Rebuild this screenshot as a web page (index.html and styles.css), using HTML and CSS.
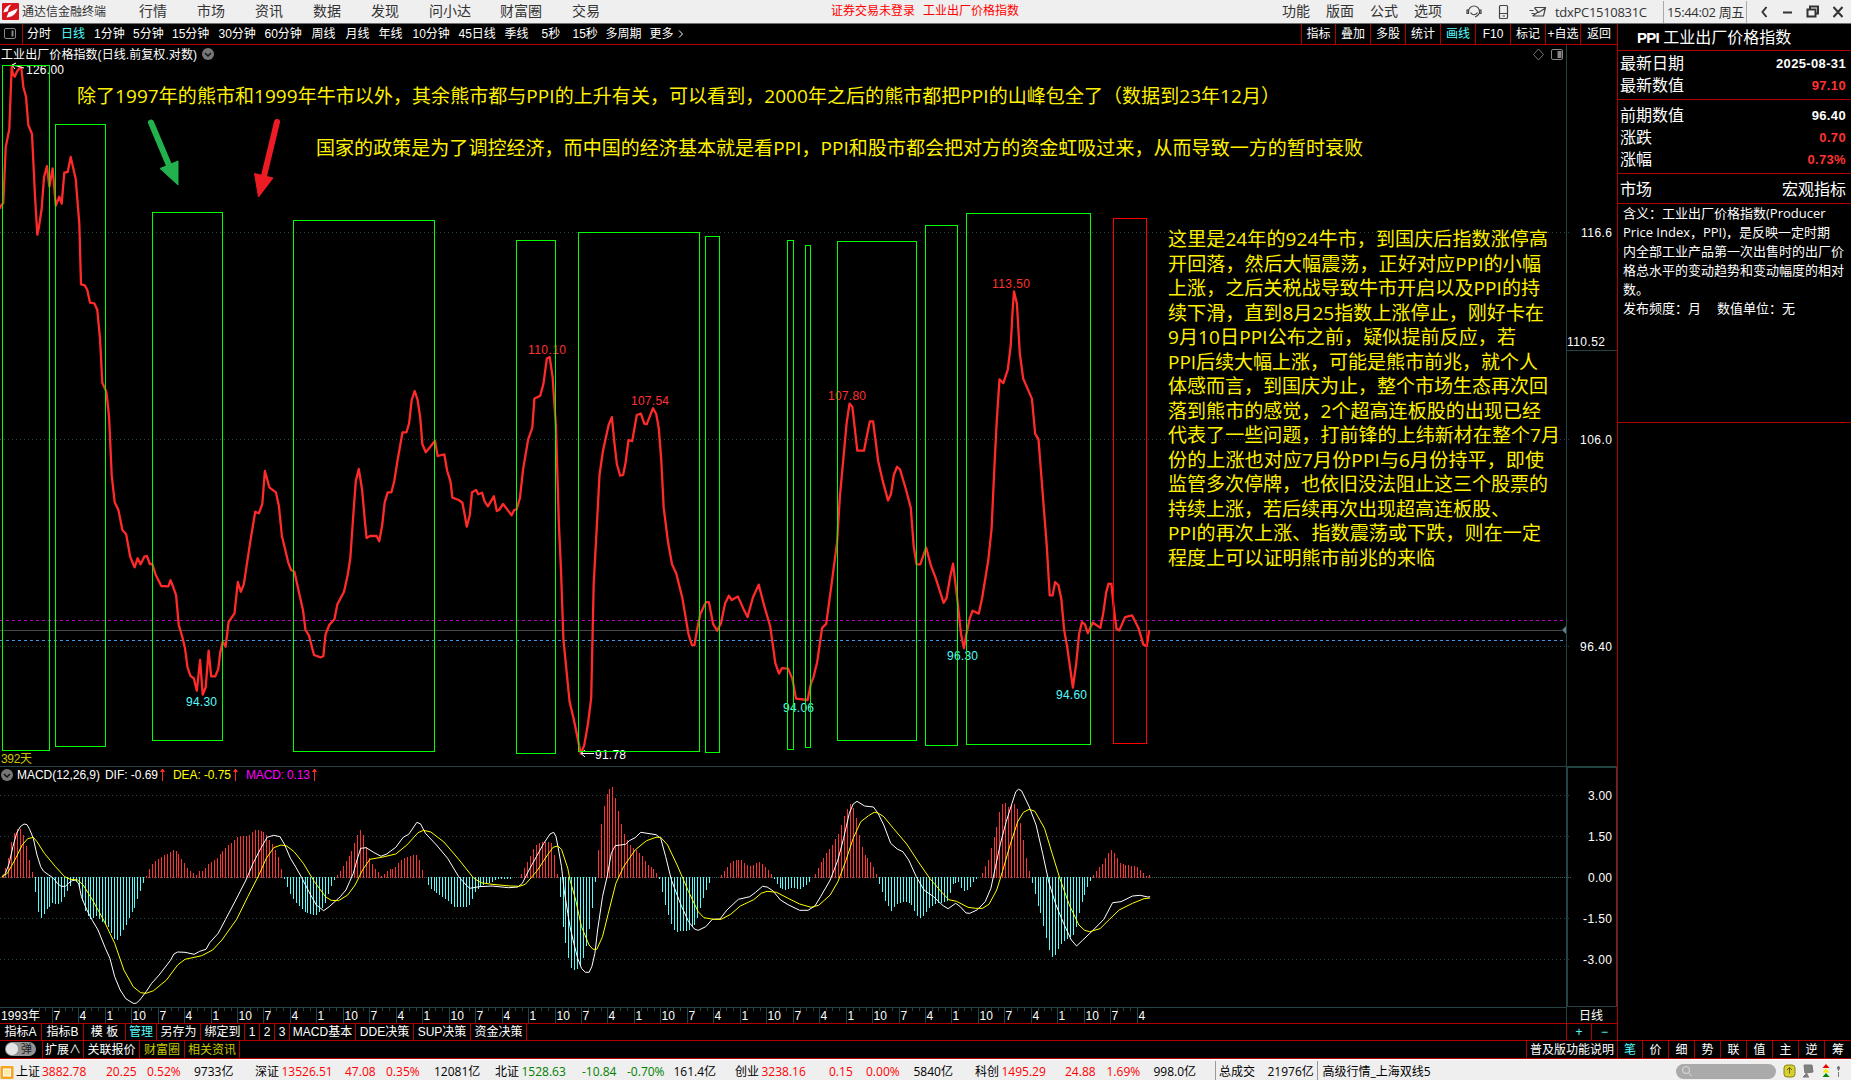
FILE: index.html
```
<!DOCTYPE html>
<html lang="zh-CN">
<head>
<meta charset="utf-8">
<title>通达信金融终端</title>
<link rel="stylesheet" href="styles.css">
</head>
<body>
<header class="topbar">
  <svg class="logo" width="17" height="17" viewBox="0 0 17 17"><rect width="17" height="17" rx="1" fill="#d8141c"/><path d="M9.500 1.500C5 2.500 2 5.500 1.500 9.500L6 8.200C6 5.500 7.500 3.500 9.500 1.500zM15.500 5.500 11 7.500 6.500 9.500 4.500 14.500C10 14.500 14.500 11 15.500 5.500z" fill="#fff"/></svg>
  <span class="appname">通达信金融终端</span>
  <nav class="menu"><span>行情</span><span>市场</span><span>资讯</span><span>数据</span><span>发现</span><span>问小达</span><span>财富圈</span><span>交易</span></nav>
  <div class="notice"><span>证券交易未登录</span><span>工业出厂价格指数</span></div>
  <nav class="menu2"><span>功能</span><span>版面</span><span>公式</span><span>选项</span></nav>
  <svg class="sysicons" width="82" height="22" viewBox="0 0 82 22" fill="none" stroke="#444" stroke-width="1.200"><path d="M3.500 10.500a5.500 5.500 0 0 1 11 0M3.500 9v3.500H2V9zM14.500 9v3.500H16V9zM14 12.500a5.500 5.500 0 0 1-4 3.500M5.500 11.500c2 3 5 3 7 0"/><rect x="34.500" y="4.500" width="8" height="13" rx="1"/><path d="M34.500 12.500h8M37.500 15h2.500"/><path d="M69.500 6.500h11l-2 8.500H68.500M69.500 7l4 4.500 7-4.500M64.500 9.500h4M67.500 15l5.500-4M66.500 12.500h3"/></svg>
  <span class="user">tdxPC1510831C</span>
  <span class="clock">15:44:02 周五</span>
  <svg class="winicons" width="92" height="22" viewBox="0 0 92 22" fill="none" stroke="#333" stroke-width="2"><path d="M11.500 6 7.500 11l4 5M28 11.500h9M52.500 8.500h8v7h-8zM55 8V5.500h8v7h-2.500M78.500 6l9 10M87.500 6l-9 10"/></svg>
</header>
<main class="work">
  <section class="left">
    <div class="toolbar">
      <svg class="paneicon" width="22" height="20" viewBox="0 0 22 20" fill="none" stroke="#888"><rect x="4.500" y="4.500" width="11" height="10" rx="1.500"/><path d="M12.500 6.500v6" stroke-width="2"/></svg>
      <div class="periods"><span>分时</span><span class="on">日线</span><span>1分钟</span><span>5分钟</span><span>15分钟</span><span>30分钟</span><span>60分钟</span><span>周线</span><span>月线</span><span>年线</span><span>10分钟</span><span>45日线</span><span>季线</span><span>5秒</span><span>15秒</span><span>多周期</span><span>更多<svg width="8" height="10" viewBox="0 0 8 10"><path d="M2 1.500 5.500 5 2 8.500" fill="none" stroke="#fff"/></svg></span></div>
      <div class="tools"><span>指标</span><span>叠加</span><span>多股</span><span>统计</span><span class="on">画线</span><span>F10</span><span>标记</span><span>+自选</span><span>返回</span></div>
    </div>
    <svg class="chart" width="1617" height="978" viewBox="0 45 1617 978">
      <g class="frame">
        <path d="M0 766.500H1617M1566.500 45V1023M0 1007.500H1566"/>
        <path d="M1566 767.500H1616.500V1006.500H1567.500V767" />
        <path d="M1566 350.500H1617"/>
      </g>
      <path class="grid" d="M0 232.500H1572M0 439.500H1572M0 646.500H1572M0 795.500H1572M0 836.500H1572M0 918.500H1572M0 959.500H1572"/>
      <path class="zero" d="M0 877.500H1572"/>
      <path class="level" d="M0 630.500H1562"/>
      <path d="M1566 626v8l-4-4z" fill="#5a8088"/>
      <path class="level magenta" d="M0 620.500H1566"/>
      <path class="level blue" d="M0 640.500H1566"/>
      <g id="hist"></g>
      <polyline id="ppi" class="ppi"/>
      <polyline id="dif" class="dif"/>
      <polyline id="dea" class="dea"/>
      <g class="mark up"><text x="528" y="354" textLength="38">110.10</text><text x="631" y="405" textLength="38">107.54</text><text x="828" y="400" textLength="38">107.80</text><text x="992" y="288" textLength="38">113.50</text></g>
      <g class="mark down"><text x="186" y="706" textLength="31">94.30</text><text x="783" y="712" textLength="31">94.06</text><text x="947" y="660" textLength="31">96.30</text><text x="1056" y="699" textLength="31">94.60</text></g>
      <g class="mark white"><text x="26" y="74" textLength="38">126.00</text><text x="595" y="759" textLength="31">91.78</text><path d="M24 68 13 65M16 63l-4 2 3 4M594 753.500H581M585 750l-4 3.500 4 3.500" fill="none" stroke="#fff"/></g>
      <g class="zones">
        <path d="M2.500 65.500H49.500V750.500H2.500zM55.500 124.500H105.500V746.500H55.500zM152.500 212.500H222.500V740.500H152.500zM293.500 220.500H434.500V751.500H293.500zM516.500 240.500H555.500V753.500H516.500zM578.500 232.500H699.500V751.500H578.500zM705.500 236.500H719.500V752.500H705.500zM787.500 240.500H793.500V749.500H787.500zM805.500 245.500H810.500V747.500H805.500zM837.500 241.500H916.500V740.500H837.500zM925.500 225.500H957.500V745.500H925.500zM966.500 213.500H1090.500V744.500H966.500z"/>
        <path class="warn" d="M1113.500 218.500H1146.500V743.500H1113.500z"/>
      </g>
      <g fill="#22b14c" stroke="#22b14c"><path d="M151 122.500 171 170" stroke-width="6" stroke-linecap="round"/><path d="M160 168.500 178 161V185z"/></g>
      <g fill="#ed1c24" stroke="#ed1c24"><path d="M277 122 263.500 178" stroke-width="6" stroke-linecap="round"/><path d="M254.500 173.500 273 178 258.500 197z"/></g>
      <g class="note">
        <text x="77" y="103" textLength="1203">除了1997年的熊市和1999年牛市以外，其余熊市都与PPI的上升有关，可以看到，2000年之后的熊市都把PPI的山峰包全了（数据到23年12月）</text>
        <text x="316" y="155" textLength="1047">国家的政策是为了调控经济，而中国的经济基本就是看PPI，PPI和股市都会把对方的资金虹吸过来，从而导致一方的暂时衰败</text>
        <text x="1168" y="246" textLength="380">这里是24年的924牛市，到国庆后指数涨停高</text>
        <text x="1168" y="270.500" textLength="373">开回落，然后大幅震荡，正好对应PPI的小幅</text>
        <text x="1168" y="295" textLength="372">上涨，之后关税战导致牛市开启以及PPI的持</text>
        <text x="1168" y="319.500" textLength="376">续下滑，直到8月25指数上涨停止，刚好卡在</text>
        <text x="1168" y="344" textLength="348">9月10日PPI公布之前，疑似提前反应，若</text>
        <text x="1168" y="368.500" textLength="370">PPI后续大幅上涨，可能是熊市前兆，就个人</text>
        <text x="1168" y="393" textLength="380">体感而言，到国庆为止，整个市场生态再次回</text>
        <text x="1168" y="417.500" textLength="373">落到熊市的感觉，2个超高连板股的出现已经</text>
        <text x="1168" y="442" textLength="392">代表了一些问题，打前锋的上纬新材在整个7月</text>
        <text x="1168" y="466.500" textLength="376">份的上涨也对应7月份PPI与6月份持平，即使</text>
        <text x="1168" y="491" textLength="380">监管多次停牌，也依旧没法阻止这三个股票的</text>
        <text x="1168" y="515.500" textLength="342">持续上涨，若后续再次出现超高连板股、</text>
        <text x="1168" y="540" textLength="373">PPI的再次上涨、指数震荡或下跌，则在一定</text>
        <text x="1168" y="564.500" textLength="267">程度上可以证明熊市前兆的来临</text>
      </g>
      <g class="lab"><text x="1" y="59" textLength="196">工业出厂价格指数(日线.前复权.对数)</text>
        <text class="olive" x="1" y="763" textLength="31">392天</text>
        <text x="17" y="779" textLength="83">MACD(12,26,9)</text><text x="105" y="779" textLength="53">DIF: -0.69</text>
        <text x="173" y="779" textLength="58" fill="#ffff00">DEA: -0.75</text><text x="246" y="779" textLength="64" fill="#ff00ff">MACD: 0.13</text>
        <path d="M162.500 781v-12M160.500 772l2-3 2 3M235.500 781v-12M233.500 772l2-3 2 3M314.500 781v-12M312.500 772l2-3 2 3" stroke="#ff2a2a" fill="#ff2a2a"/>
      </g>
      <g fill="none"><circle cx="208" cy="54" r="6" fill="#777"/><path d="m205 53 3 3 3-3" stroke="#111" stroke-width="1.500"/><circle cx="7" cy="775" r="6" fill="#777"/><path d="m4 774 3 3 3-3" stroke="#111" stroke-width="1.500"/><path d="M1538.500 49l5 5.500-5 5.500-5-5.500z" stroke="#777"/><rect x="1551.500" y="49.500" width="11" height="10" rx="1.500" stroke="#888"/><path d="M1557.500 51h4v7h-4z" fill="#888"/></g>
      <g class="axis"><text x="1581" y="237" textLength="31">116.6</text><text x="1567" y="346" textLength="38">110.52</text><text x="1580" y="444" textLength="32">106.0</text><text x="1580" y="651" textLength="32">96.40</text><text x="1588" y="800" textLength="24">3.00</text><text x="1588" y="841" textLength="24">1.50</text><text x="1588" y="882" textLength="24">0.00</text><text x="1583" y="923" textLength="29">-1.50</text><text x="1583" y="964" textLength="29">-3.00</text></g>
      <g class="lab"><text x="1" y="1020" textLength="39">1993年</text><text x="1579" y="1020" textLength="24">日线</text></g>
      <path id="ticks" class="ticks"/>
      <g id="months" class="lab"></g>
    </svg>
    <div class="tabs row1"><span>指标A</span><span>指标B</span><span>模 板</span><span class="on">管理</span><span>另存为</span><span>绑定到</span><span>1</span><span>2</span><span>3</span><span>MACD基本</span><span>DDE决策</span><span>SUP决策</span><span>资金决策</span><span class="fill"></span><span class="on">+</span><span class="on">−</span></div>
    <div class="tabs row2"><span><i class="switch">弹</i></span><span>扩展∧</span><span>关联报价</span><span class="gold">财富圈</span><span class="gold">相关资讯</span><span class="fill"></span><span>普及版功能说明</span></div>
  </section>
  <aside class="quote">
    <h1><b>PPI</b> 工业出厂价格指数</h1>
    <dl class="latest"><dt>最新日期</dt><dd>2025-08-31</dd><dt>最新数值</dt><dd class="red">97.10</dd></dl>
    <dl class="prev"><dt>前期数值</dt><dd>96.40</dd><dt>涨跌</dt><dd class="red">0.70</dd><dt>涨幅</dt><dd class="red">0.73%</dd></dl>
    <dl class="market"><dt>市场</dt><dd>宏观指标</dd></dl>
    <div class="desc">含义：工业出厂价格指数(Producer<br>Price Index，PPI)，是反映一定时期<br>内全部工业产品第一次出售时的出厂价<br>格总水平的变动趋势和变动幅度的相对<br>数。<br>发布频度：月<span class="unit">数值单位：无</span></div>
    <div class="blank"></div>
    <div class="modes"><span class="on">笔</span><span>价</span><span>细</span><span>势</span><span>联</span><span>值</span><span>主</span><span>逆</span><span>筹</span></div>
  </aside>
</main>
<footer class="status">
  <svg width="16" height="20" viewBox="0 0 16 20"><rect x=".5" y="4" width="13" height="13" rx="1" fill="#f5a623"/><rect x="3.500" y="7" width="7" height="7" fill="#ffe9a8" stroke="#fff"/></svg>
  <span>上证</span><span class="u">3882.78</span><span class="u">20.25</span><span class="u">0.52%</span><span>9733亿</span>
  <span>深证</span><span class="u">13526.51</span><span class="u">47.08</span><span class="u">0.35%</span><span>12081亿</span>
  <span>北证</span><span class="d">1528.63</span><span class="d">-10.84</span><span class="d">-0.70%</span><span>161.4亿</span>
  <span>创业</span><span class="u">3238.16</span><span class="u">0.15</span><span class="u">0.00%</span><span>5840亿</span>
  <span>科创</span><span class="u">1495.29</span><span class="u">24.88</span><span class="u">1.69%</span><span>998.0亿</span>
  <span class="bar">总成交</span><span>21976亿</span><span class="bar wide">高级行情_上海双线5</span>
  <span class="search"><svg width="12" height="12" viewBox="0 0 12 12" fill="none" stroke="#ddd"><circle cx="5" cy="5" r="3.500"/><path d="M7.500 7.500 10.500 11"/></svg></span>
  <svg width="72" height="20" viewBox="0 0 72 20"><rect x="8" y="3" width="11" height="12" rx="3" fill="#d8d030" stroke="#8a8410"/><path d="M13.500 5.500v6M11 8l2.500-2.500L16 8" stroke="#6b6400" fill="none"/><path d="M28 3h8l1 7-8 1zM31 11l-4 4h6" fill="#808080" stroke="#777"/><path d="m50 2 3.500 4h-7z" fill="#e00"/><path d="m50 6.500 3.500 4h-7z" fill="#ee0"/><path d="m50 11 3.500 4h-7z" fill="#080"/><path d="M62.500 4v11" stroke="#777" stroke-dasharray="5 1"/><circle cx="62.500" cy="6" r="1.700" fill="#777"/></svg>
</footer>
<script src="chart.js"></script>
</body>
</html>
```
FILE: styles.css
```
* { box-sizing: border-box; }
body { margin: 0; width: 1851px; height: 1080px; overflow: hidden; display: flex; flex-direction: column; background: #000; color: #fff; font: 12px/16px "Liberation Sans", "Noto Sans CJK SC", sans-serif; }
span, h1, dt, dd { white-space: nowrap; }
svg { display: block; flex: none; }
.on { color: #54fcfc; }
.red { color: #ff3232; }
.gold { color: #c8c800; }

.topbar { height: 24px; flex: none; display: flex; align-items: center; background: #efefef; border-bottom: 1px solid #707070; color: #333; padding-left: 2px; }
.appname { width: 120px; padding-left: 3px; }
.menu { display: grid; grid-template-columns: repeat(5, 58px) 71px 72px 120px; width: 553px; font-size: 14px; }
.notice { display: grid; grid-template-columns: 92px 1fr; width: 590px; color: #f00; padding-left: 139px; margin-top: -2px; }
.menu2 { display: grid; grid-template-columns: repeat(4, 44px); width: 182px; font-size: 14px; }
.menu, .menu2 { margin-top: -1px; }
.sysicons { margin-left: 1px; }
.user { font: 13px/22px "Open Sans", sans-serif; width: 116px; padding-left: 8px; letter-spacing: -.3px; }
.clock { width: 84px; height: 22px; border: solid #aaa; border-width: 0 1px; font: 13px/22px "Open Sans", "Noto Sans CJK SC", sans-serif; padding-left: 3px; letter-spacing: -.35px; }
.winicons { margin-left: 8px; }

.work { display: flex; height: 1034px; flex: none; }
.left { width: 1617px; display: flex; flex-direction: column; }
.toolbar { height: 21px; display: flex; border-bottom: 1px solid #b00000; line-height: 21px; }
.paneicon { border-right: 1px solid #b00000; width: 23px; }
.periods { display: grid; grid-template-columns: 34px 33px 39px 39px 46.5px 46px 47px 34px 33px 34px 46px 46px 37px 31px 33px 44px 60px; padding-left: 4px; width: 1278px; height: 20px; }
.periods svg { display: inline-block; vertical-align: -1px; margin-left: 3px; }
.tools { display: grid; grid-template-columns: 34px repeat(7, 35px) 37px; text-align: center; height: 20px; }
.tools span { border-left: 1px solid #b00000; height: 20px; }
.chart { background: #000; font-family: "Liberation Sans", "Noto Sans CJK SC", sans-serif; font-size: 12px; }
.frame path { fill: none; stroke: #244444; shape-rendering: crispEdges; }
.grid { stroke: #244444; stroke-dasharray: 1 3; shape-rendering: crispEdges; }
.zero { stroke: #346060; stroke-dasharray: 1 1; shape-rendering: crispEdges; }
.level { stroke: #484848; shape-rendering: crispEdges; }
.level.magenta { stroke: #c000c0; stroke-dasharray: 3 3; }
.level.blue { stroke: #3c96e6; stroke-dasharray: 3 3; }
.ppi, .dif, .dea { fill: none; stroke-linejoin: round; }
.ppi { stroke: #ff2a2a; stroke-width: 2.3; }
.dif { stroke: #fff; }
.dea { stroke: #ff0; }
.bars-up, .bars-down { shape-rendering: crispEdges; fill: none; }
.bars-up { stroke: #ff3232; }
.bars-down { stroke: #54fcfc; }
.mark { font-size: 12px; }
.mark.up { fill: #ff3232; }
.mark.down { fill: #54fcfc; }
.mark.white { fill: #fff; }
.zones path { fill: none; stroke: #0f0; shape-rendering: crispEdges; }
.zones .warn { stroke: #f00; }
.note { fill: #fff200; font: 19px "Open Sans", "Noto Sans CJK SC", sans-serif; }
.lab { fill: #fff; }
.olive { fill: #c8c800; }
.axis { fill: #fff; }
.ticks { stroke: #244444; shape-rendering: crispEdges; }

.tabs { display: grid; border-top: 1px solid #b00000; text-align: center; line-height: 16px; overflow: hidden; }
.tabs span { border-right: 1px solid #b00000; }
.tabs span:last-child { border-right: 0; }
.row1 { height: 17px; grid-template-columns: 42px 42px 42px 31px 44px 44px 15px 15px 15px 66px 58px 57px 56px 1fr 25px 25px; }
.row2 { height: 18px; line-height: 18px; grid-template-columns: 43px 41px 56px 45px 55px 1fr 90px; }
.switch { display: flex; align-items: center; justify-content: flex-end; width: 31px; height: 14px; margin: 1px 0 0 5px; padding-right: 4px; border-radius: 7px; background: radial-gradient(circle at 7px 7px, #e4e4e4 5.5px, #949494 6.5px); color: #222; font-style: normal; font-size: 11px; }

.quote { width: 234px; border-left: 1px solid #b00000; display: flex; flex-direction: column; }
.quote h1 { margin: 0; height: 27px; font-size: 16px; font-weight: 400; line-height: 27px; padding-left: 19px; border-bottom: 1px solid #b00000; }
.quote b { font-size: 15px; letter-spacing: -.8px; }
.quote dl { margin: 0; display: grid; grid-template-columns: 1fr auto; grid-auto-rows: 22px; border-bottom: 1px solid #b00000; padding: 0 5px 0 2px; font-size: 16px; line-height: 23px; }
.quote dd { margin: 0; font-weight: 700; font-size: 13.5px; text-align: right; }
.quote dd:not(.market dd) { font-size: 13px; letter-spacing: .35px; }
.quote .latest { height: 49px; padding-top: 1px; }
.quote .prev { height: 74px; padding-top: 4px; }
.quote .market { height: 30px; padding-top: 4px; }
.quote .market dd { font-weight: 400; font-size: 16px; }
.desc { height: 219px; border-bottom: 1px solid #b00000; padding: 0 0 0 5px; font: 13px/19px "Open Sans", "Noto Sans CJK SC", sans-serif; white-space: nowrap; }
.unit { margin-left: 16px; }
.blank { flex: 1; }
.modes { height: 18px; border-top: 1px solid #b00000; display: grid; grid-template-columns: 25px repeat(8, 26px); text-align: center; line-height: 18px; }
.modes span { border-right: 1px solid #b00000; height: 17px; }
.modes span:last-child { border: 0; }

.status { height: 22px; flex: none; border-top: 1px solid #b00000; background: #efefef; box-shadow: inset 0 1px #fff; color: #000; display: grid; align-items: center; font: 12px/21px "Open Sans", "Noto Sans CJK SC", sans-serif; padding-top: 2px;
  grid-template-columns: 16px 26px 64px 41px 47px 61px 26.5px 63.5px 41px 48px 61px 26.5px 60.5px 45px 46.5px 61.5px 26.5px 67.5px 37px 47.5px 61.5px 26.5px 63.5px 41.5px 47px 61.5px 52.5px 49px 359.5px 100px 72px; }
.u { color: #f00; }
.d { color: #008000; }
.bar { border-left: 1px solid #999; padding-left: 3px; }
.bar.wide { padding-left: 5px; }
.search { height: 15px; border-radius: 8px; background: #aaa; padding: 1px 5px; }
```
FILE: chart.js
```
// Each segment: [originX, originY, unitsPerPixelX, unitsPerPixelY, "x,y x,y ..."]
function toPoints(segments) {
  return segments.flatMap(function (s) {
    return s[4].trim().split(/\s+/).map(function (p) {
      var c = p.split(",");
      return [s[0] + c[0] / s[2], s[1] + c[1] / s[3]];
    });
  });
}

function line(id, segments) {
  document.getElementById(id).setAttribute("points", toPoints(segments).map(function (p) {
    return p[0].toFixed(1) + "," + p[1].toFixed(1);
  }).join(" "));
}

var A = [0, 750, 2.7034, 3], B = [570, 750, 2.6133, 3];

line("ppi", [
  [0, 60, 3, 3, "0,446 2,438 10,430 17,262 28,208 35,18 38,40 44,50 50,36 60,22 64,22 70,80 78,110 85,195 96,222 105,408 112,524 116,505 125,445 132,352 141,318 148,380 158,325 167,437 178,410 185,431 193,338 203,336 212,291 227,357 238,490 243,673 254,676 262,690 270,728 283,730 292,750 300,835 307,968 319,995 322,1020"],
  [0, 400, 2.7034, 3, "295,52 302,226 310,307 320,330 331,390 341,402 352,470 364,502 372,475 380,493 390,470 397,468 405,492 412,492 420,523 436,558 455,559 461,541 468,560 476,586 483,674 493,712 500,745 507,802 515,828 524,835 532,872 541,780 548,884 556,862 564,752 571,829 582,829 590,808 595,760 602,725 610,740 618,666 634,640 643,546 651,575 659,553 675,436 690,335 700,340 709,312 716,213 728,262 746,277 754,318 762,408 779,487 787,510 796,515 810,586 819,631 826,690 835,706 849,765 867,772 874,769 880,704 890,675 904,658 912,613 930,575 940,525 947,475 955,345 962,243 970,207 979,270 987,370 991,414 1000,408 1018,408 1025,424 1033,378 1040,307 1048,277 1058,277 1066,243 1075,180 1088,97 1099,97 1106,70 1113,0 1121,-27 1129,0 1136,52 1142,133 1151,157 1160,145 1176,122 1183,168 1201,163 1209,213 1218,245 1223,293 1240,300 1250,308 1256,343 1262,380 1270,345 1276,277 1287,270 1293,283 1303,278 1310,304 1319,319 1335,289 1343,333 1349,330 1360,312 1383,346 1390,330 1397,328"],
  [500, 200, 2.4123, 2.8, "40,866 48,835 56,752 68,670 78,638 83,556 97,548 105,514 113,444 120,440 127,495 135,638 142,908 147,1030 153,1230 168,1405 178,1455 195,1550 203,1527 212,1468 220,1395 226,1075 233,925 240,770 248,705 262,630 270,608 276,680 282,740 290,772 297,770 303,735 310,672 319,675 330,602 340,598 348,626 354,628 369,583 377,600 383,640 389,730 395,862 405,955 415,1020 425,1045 440,1115 455,1217 463,1246 469,1247 476,1200 483,1160 497,1126 504,1126 514,1187 524,1206 533,1185 543,1130 552,1108 559,1120 574,1110 588,1147 597,1168 610,1113 624,1077 637,1135 652,1195 664,1297 673,1326 680,1311 695,1312 705,1340 714,1396 742,1400 750,1355 757,1333 765,1295 777,1198 787,1187 800,1075 813,960 820,830 830,702 836,625 843,570 850,580 862,702 878,702 885,660 892,620 900,620 912,730 923,785 936,841 943,824 950,770 958,747 965,754 978,805 991,862 998,970 1005,1020 1014,1020 1028,973 1040,1025 1050,1055 1070,1128 1077,1115 1086,1055 1093,1018 1103,1116 1112,1215 1119,1255 1125,1215 1133,1172 1140,1150 1155,1158 1163,1115 1178,1008 1186,920 1192,765 1198,625 1205,502 1214,513 1225,475 1232,408 1236,320 1240,256 1247,290 1254,430 1262,500 1283,556 1291,655 1299,670 1306,775 1319,970 1326,1107 1333,1107 1339,1070 1347,1078 1354,1117 1361,1205 1368,1250 1382,1365 1390,1298 1397,1215 1404,1182 1411,1188 1418,1213 1430,1183 1448,1198 1455,1158 1462,1100 1468,1074 1475,1075 1480,1135 1487,1200 1494,1205 1508,1168 1525,1163 1540,1198 1552,1245 1560,1249 1566,1205"]
]);

line("dif", [
  A.concat("5,380 15,370 25,340 35,290 45,250 55,230 65,222 73,224 80,238 90,265 100,315 110,350 118,364 132,375 145,385 155,400 165,409 177,409 185,400 195,392 205,390 213,402 220,440 235,480 250,512 265,540 285,595 297,625 310,680 325,720 340,746 360,760 368,760 378,750 395,725 410,700 430,675 460,632 470,612 480,606 500,607 525,613 540,604 557,598 567,578 590,550 610,508 635,455 665,390 685,338 705,295 722,262 740,256 757,260 770,285 785,325 800,352 815,382 835,425 855,465 875,482 890,470 920,440 935,420 945,395 955,370 965,330 975,295 990,293 1010,307 1030,319 1045,312 1070,292 1090,262 1105,253 1127,217 1137,222 1150,250 1180,285 1210,325 1240,380 1260,405 1270,415 1295,410 1330,408 1375,413 1400,411 1412,400 1430,360 1450,320 1470,280 1487,252 1497,247 1503,260 1510,300 1518,350 1525,420 1535,490"),
  B.concat("0,530 10,580 20,625 30,655 40,667 50,667 57,650 65,610 72,540 85,440 97,380 108,310 118,287 145,283 155,272 170,263 185,247 225,254 237,265 250,320 265,390 290,465 310,515 325,537 335,541 355,530 372,508 392,507 410,480 440,448 470,440 485,427 503,409 515,411 530,422 550,450 570,464 600,481 622,481 640,468 655,440 680,390 700,330 715,265 730,190 740,162 750,154 770,168 793,171 805,190 820,225 838,280 855,297 870,305 885,330 905,380 925,420 950,440 975,467 988,476 1008,460 1020,470 1035,489 1045,490 1065,479 1085,455 1100,415 1112,350 1125,280 1140,215 1155,160 1165,125 1172,118 1180,122 1200,170 1218,225 1235,310 1252,400 1270,465 1290,520 1310,570 1324,588 1340,570 1365,543 1395,508 1418,458 1440,455 1470,438 1490,436 1510,441 1516,440")
]);

line("dea", [
  A.concat("5,381 20,370 40,330 60,285 75,266 90,262 100,275 120,310 150,350 175,380 190,388 210,390 225,405 250,450 280,510 310,580 335,660 360,710 380,728 395,730 415,722 450,690 480,645 500,628 545,617 575,600 600,570 640,508 670,440 700,375 720,325 740,293 760,285 775,288 795,305 820,340 850,395 880,440 895,451 915,452 940,435 960,405 980,360 1000,328 1035,321 1070,312 1100,285 1130,248 1145,241 1165,246 1200,276 1240,328 1280,384 1300,398 1330,403 1380,408 1405,409 1420,403 1450,365 1480,315 1495,292 1508,288 1518,298 1535,355"),
  B.concat("0,390 15,450 30,530 50,585 60,598 70,598 85,560 100,490 120,400 140,350 170,300 200,272 225,262 237,262 255,285 280,345 310,425 335,485 350,503 375,508 395,508 420,493 445,468 480,449 500,430 515,424 540,427 570,445 600,462 630,472 650,466 680,435 700,395 720,335 740,265 760,215 780,197 795,187 805,189 820,200 845,235 880,282 910,335 940,385 970,425 990,449 1010,454 1040,472 1060,475 1078,475 1095,463 1115,420 1130,365 1150,285 1170,215 1185,187 1200,178 1215,184 1240,235 1260,310 1280,385 1305,465 1330,525 1345,541 1358,545 1385,536 1410,508 1435,480 1470,460 1500,446 1516,444")
]);

// MACD histogram: one bar per month, heights interpolated along the envelope
var env = toPoints([
  A.concat("0,382 9,380 17,345 25,315 33,265 41,243 50,234 58,237 66,262 72,290 80,330 88,366 92,382 96,426 104,486 112,504 120,494 128,478 145,455 152,465 168,456 177,434 186,416 200,392 210,396 217,420 224,460 232,486 245,508 262,498 280,518 296,532 304,556 312,570 320,570 333,543 342,524 358,486 366,467 374,440 383,416 391,390 394,382 399,370 407,352 415,339 424,330 445,316 470,299 478,303 494,332 510,358 533,376 540,360 550,364 566,338 585,327 600,305 620,284 645,258 670,258 693,237 715,246 735,280 750,310 757,340 764,372 768,382 780,420 790,440 800,457 830,490 852,498 866,484 880,458 892,418 900,396 910,380 916,370 932,342 948,312 956,285 972,237 980,243 988,275 996,318 1010,350 1033,380 1050,360 1066,354 1082,332 1098,322 1113,318 1124,312 1130,318 1137,340 1145,372 1150,382 1160,410 1185,434 1210,450 1228,472 1265,470 1272,460 1286,425 1302,405 1320,400 1345,388 1385,386 1400,382 1408,378 1416,357 1432,322 1447,287 1455,279 1480,274 1490,277 1496,298 1504,340 1508,382 1513,416 1520,497 1527,570 1535,614"),
  B.concat("1,648 9,663 17,658 25,651 33,632 41,600 48,557 56,503 64,422 68,382 72,327 80,240 88,178 96,138 103,118 111,111 116,128 124,168 132,210 140,246 148,267 160,290 178,305 187,312 195,328 203,343 218,356 226,369 233,382 239,410 247,453 255,488 263,516 271,537 279,545 310,542 325,527 334,503 341,473 349,443 357,418 365,398 372,384 392,380 401,368 410,354 417,342 433,330 448,330 456,340 472,348 490,338 500,336 508,348 524,368 532,382 540,398 548,414 564,419 580,413 600,417 616,408 630,390 640,376 655,340 670,308 686,284 702,252 718,197 726,174 733,162 740,170 748,200 754,244 762,282 770,310 786,338 794,352 803,376 809,402 825,454 840,483 856,462 870,455 885,457 893,466 908,499 916,504 924,497 940,473 955,462 985,456 994,430 1002,402 1015,394 1024,416 1033,427 1040,420 1048,408 1055,394 1070,380 1079,366 1094,328 1110,258 1118,213 1125,171 1133,156 1140,160 1146,170 1160,160 1169,174 1178,222 1186,276 1193,324 1201,365 1206,386 1217,435 1232,501 1240,543 1248,576 1256,612 1263,623 1270,614 1276,597 1285,580 1300,567 1315,558 1323,534 1331,492 1340,452 1348,422 1356,404 1365,380 1380,356 1391,342 1400,324 1408,308 1415,300 1423,308 1431,324 1440,342 1455,345 1478,348 1494,362 1502,374 1510,379 1517,373")
]);
var up = "", down = "", k = 0;
for (var i = 1; i <= 392; i++) {
  var x = Math.floor(0.1 + 2.932 * i) + 0.5;
  while (k < env.length - 2 && env[k + 1][0] < x) k++;
  var a = env[k], b = env[k + 1];
  var y = Math.round(a[1] + (b[1] - a[1]) * (x - a[0]) / (b[0] - a[0]));
  if (y < 877) up += "M" + x + " 878V" + y;
  else if (y > 878) down += "M" + x + " 877V" + y;
}
document.getElementById("hist").innerHTML = '<path class="bars-up" d="' + up + '"/><path class="bars-down" d="' + down + '"/>';

// Time axis: a labelled tick every nine months, with three minor ticks between
var names = ["7", "4", "1", "10"], ticks = "M32.5 1008v3M39.5 1008v3M45.5 1008v3", months = "";
for (var n = 0; n < 42; n++) {
  var tx = Math.floor(52.3 + 26.46 * n) + 0.5;
  ticks += "M" + tx + " 1008V1023";
  if (n < 41) for (var m = 1; m < 4; m++) ticks += "M" + (Math.floor(tx + 6.6 * m) + 0.5) + " 1008v3";
  months += '<text x="' + (tx + 1) + '" y="1020">' + names[n % 4] + "</text>";
}
document.getElementById("ticks").setAttribute("d", ticks);
document.getElementById("months").innerHTML = months;
```
